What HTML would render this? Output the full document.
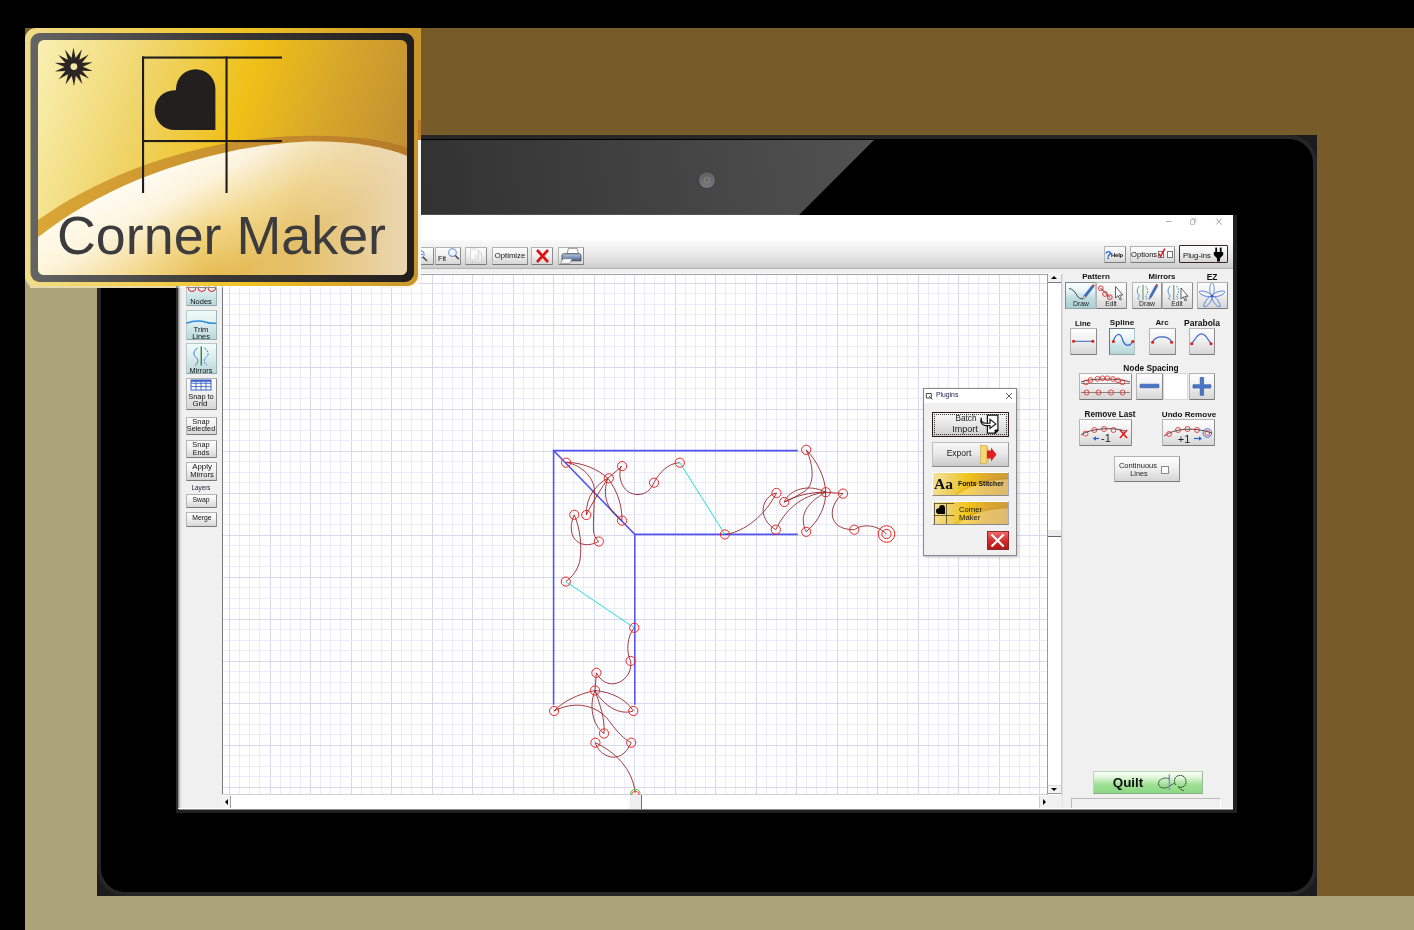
<!DOCTYPE html>
<html><head><meta charset="utf-8">
<style>
*{box-sizing:border-box;margin:0;padding:0}
html,body{width:1414px;height:930px;overflow:hidden;background:#000}
body{position:relative;font-family:"Liberation Sans",sans-serif;color:#000}
.a{position:absolute}
.btn{position:absolute;background:linear-gradient(#fdfdfd 0%,#f1f1f1 45%,#d6d6d6 100%);border:1px solid #b4b4b4;border-right-color:#8c8c8c;border-bottom-color:#7a7a7a;border-radius:1px}
.tbtn{position:absolute;background:linear-gradient(#f2fbfb 0%,#dff0f1 40%,#b9d8da 100%);border:1px solid #b9c9ca;border-bottom-color:#8ea8aa;border-right-color:#9cb2b3}
.lbl{position:absolute;font-size:7px;line-height:7px;text-align:center;color:#111;white-space:nowrap}
.rl{position:absolute;font-size:8px;font-weight:bold;line-height:8px;text-align:center;white-space:nowrap;color:#111}
</style></head><body>

<div class="a" style="left:25px;top:28px;width:1389px;height:868px;background:#775c2a"></div>
<div class="a" style="left:25px;top:200px;width:72px;height:730px;background:#aca379"></div>
<div class="a" style="left:25px;top:896px;width:1389px;height:34px;background:#aca379"></div>
<div class="a" style="left:97px;top:135px;width:1220px;height:761px;background:#1c1c1c"></div>
<div class="a" style="left:97px;top:135px;width:1220px;height:761px;background:#000;border:4px solid #262626;border-radius:28px"></div>
<svg class="a" style="left:0;top:0" width="1414" height="930">
<defs><linearGradient id="refl" x1="330" y1="216" x2="874" y2="140" gradientUnits="userSpaceOnUse">
<stop offset="0" stop-color="#2b2b2b"/><stop offset="1" stop-color="#525252"/></linearGradient></defs>
<polygon points="101,140 874,140 798,216 101,216" fill="url(#refl)"/><rect x="101" y="214" width="697" height="1.2" fill="#5a5a5a" opacity="0.7"/>
</svg>
<div class="a" style="left:698px;top:171px;width:18px;height:18px;border-radius:50%;background:#3e3e3e"></div>
<div class="a" style="left:699px;top:172px;width:16px;height:16px;border-radius:50%;background:linear-gradient(#5c5c62,#7a7a7e)"></div>
<div class="a" style="left:704px;top:177px;width:6px;height:6px;border-radius:1.5px;background:#6e6e70;border:0.6px solid #858585"></div>
<div class="a" style="left:176px;top:215px;width:1061px;height:598px;background:#202020"></div>
<div class="a" style="left:176px;top:215px;width:3px;height:595px;background:#2e2e2e"></div>
<div class="a" style="left:178px;top:215px;width:1054.5px;height:594px;background:#f0f0f0;border-bottom:1px solid #fff"></div>
<div class="a" style="left:179px;top:809px;width:1054px;height:1px;background:#8a8a8a"></div>
<div class="a" style="left:178px;top:215px;width:4px;height:593px;background:linear-gradient(90deg,#777,#d8d8d8,#f0f0f0)"></div>
<div class="a" style="left:180px;top:215px;width:1052.5px;height:26px;background:#fff"></div>
<svg class="a" style="left:1160px;top:214px" width="70" height="14" viewBox="1160 214 70 14"><path d="M1166,221.5 H1171.5" stroke="#a8a8a8" stroke-width="0.9"/><path d="M1190.5,219.8 h4 v4.6 h-4 z" fill="#fff" stroke="#b4b4b4" stroke-width="0.9"/><path d="M1191.6,218.6 h4.2 v4.4" fill="none" stroke="#b4b4b4" stroke-width="0.8"/><path d="M1216.3,218.6 L1221.5,224.6 M1221.5,218.6 L1216.3,224.6" stroke="#8c8c8c" stroke-width="0.8"/></svg>
<div class="a" style="left:180px;top:240px;width:1052.5px;height:28.5px;background:linear-gradient(#fbfbfb,#f0f0f0 30%,#e4e4e4 60%,#cacaca)"></div>
<div class="a" style="left:180px;top:268px;width:1052.5px;height:1px;background:#b4b4b4"></div>
<div class="a" style="left:222px;top:273px;width:840px;height:1px;background:#fafafa"></div>
<svg class="a" style="left:223px;top:275px" width="825" height="520" shape-rendering="crispEdges"><rect x="0" y="0" width="825" height="520" fill="#fff"/><rect x="6" y="0" width="1" height="520" fill="#d8d8ea"/><rect x="16" y="0" width="1" height="520" fill="#ebebfc"/><rect x="26" y="0" width="1" height="520" fill="#ebebfc"/><rect x="36" y="0" width="1" height="520" fill="#ebebfc"/><rect x="47" y="0" width="1" height="520" fill="#d8d8ea"/><rect x="57" y="0" width="1" height="520" fill="#ebebfc"/><rect x="67" y="0" width="1" height="520" fill="#ebebfc"/><rect x="77" y="0" width="1" height="520" fill="#ebebfc"/><rect x="87" y="0" width="1" height="520" fill="#d8d8ea"/><rect x="97" y="0" width="1" height="520" fill="#ebebfc"/><rect x="107" y="0" width="1" height="520" fill="#ebebfc"/><rect x="117" y="0" width="1" height="520" fill="#ebebfc"/><rect x="128" y="0" width="1" height="520" fill="#d8d8ea"/><rect x="138" y="0" width="1" height="520" fill="#ebebfc"/><rect x="148" y="0" width="1" height="520" fill="#ebebfc"/><rect x="158" y="0" width="1" height="520" fill="#ebebfc"/><rect x="168" y="0" width="1" height="520" fill="#d8d8ea"/><rect x="178" y="0" width="1" height="520" fill="#ebebfc"/><rect x="188" y="0" width="1" height="520" fill="#ebebfc"/><rect x="198" y="0" width="1" height="520" fill="#ebebfc"/><rect x="209" y="0" width="1" height="520" fill="#d8d8ea"/><rect x="219" y="0" width="1" height="520" fill="#ebebfc"/><rect x="229" y="0" width="1" height="520" fill="#ebebfc"/><rect x="239" y="0" width="1" height="520" fill="#ebebfc"/><rect x="249" y="0" width="1" height="520" fill="#d8d8ea"/><rect x="259" y="0" width="1" height="520" fill="#ebebfc"/><rect x="269" y="0" width="1" height="520" fill="#ebebfc"/><rect x="279" y="0" width="1" height="520" fill="#ebebfc"/><rect x="290" y="0" width="1" height="520" fill="#d8d8ea"/><rect x="300" y="0" width="1" height="520" fill="#ebebfc"/><rect x="310" y="0" width="1" height="520" fill="#ebebfc"/><rect x="320" y="0" width="1" height="520" fill="#ebebfc"/><rect x="330" y="0" width="1" height="520" fill="#d8d8ea"/><rect x="340" y="0" width="1" height="520" fill="#ebebfc"/><rect x="350" y="0" width="1" height="520" fill="#ebebfc"/><rect x="360" y="0" width="1" height="520" fill="#ebebfc"/><rect x="371" y="0" width="1" height="520" fill="#d8d8ea"/><rect x="381" y="0" width="1" height="520" fill="#ebebfc"/><rect x="391" y="0" width="1" height="520" fill="#ebebfc"/><rect x="401" y="0" width="1" height="520" fill="#ebebfc"/><rect x="411" y="0" width="1" height="520" fill="#d8d8ea"/><rect x="421" y="0" width="1" height="520" fill="#ebebfc"/><rect x="431" y="0" width="1" height="520" fill="#ebebfc"/><rect x="441" y="0" width="1" height="520" fill="#ebebfc"/><rect x="452" y="0" width="1" height="520" fill="#d8d8ea"/><rect x="462" y="0" width="1" height="520" fill="#ebebfc"/><rect x="472" y="0" width="1" height="520" fill="#ebebfc"/><rect x="482" y="0" width="1" height="520" fill="#ebebfc"/><rect x="492" y="0" width="1" height="520" fill="#d8d8ea"/><rect x="502" y="0" width="1" height="520" fill="#ebebfc"/><rect x="512" y="0" width="1" height="520" fill="#ebebfc"/><rect x="522" y="0" width="1" height="520" fill="#ebebfc"/><rect x="533" y="0" width="1" height="520" fill="#d8d8ea"/><rect x="543" y="0" width="1" height="520" fill="#ebebfc"/><rect x="553" y="0" width="1" height="520" fill="#ebebfc"/><rect x="563" y="0" width="1" height="520" fill="#ebebfc"/><rect x="573" y="0" width="1" height="520" fill="#d8d8ea"/><rect x="583" y="0" width="1" height="520" fill="#ebebfc"/><rect x="593" y="0" width="1" height="520" fill="#ebebfc"/><rect x="603" y="0" width="1" height="520" fill="#ebebfc"/><rect x="614" y="0" width="1" height="520" fill="#d8d8ea"/><rect x="624" y="0" width="1" height="520" fill="#ebebfc"/><rect x="634" y="0" width="1" height="520" fill="#ebebfc"/><rect x="644" y="0" width="1" height="520" fill="#ebebfc"/><rect x="654" y="0" width="1" height="520" fill="#d8d8ea"/><rect x="664" y="0" width="1" height="520" fill="#ebebfc"/><rect x="674" y="0" width="1" height="520" fill="#ebebfc"/><rect x="684" y="0" width="1" height="520" fill="#ebebfc"/><rect x="695" y="0" width="1" height="520" fill="#d8d8ea"/><rect x="705" y="0" width="1" height="520" fill="#ebebfc"/><rect x="715" y="0" width="1" height="520" fill="#ebebfc"/><rect x="725" y="0" width="1" height="520" fill="#ebebfc"/><rect x="735" y="0" width="1" height="520" fill="#d8d8ea"/><rect x="745" y="0" width="1" height="520" fill="#ebebfc"/><rect x="755" y="0" width="1" height="520" fill="#ebebfc"/><rect x="765" y="0" width="1" height="520" fill="#ebebfc"/><rect x="776" y="0" width="1" height="520" fill="#d8d8ea"/><rect x="786" y="0" width="1" height="520" fill="#ebebfc"/><rect x="796" y="0" width="1" height="520" fill="#ebebfc"/><rect x="806" y="0" width="1" height="520" fill="#ebebfc"/><rect x="816" y="0" width="1" height="520" fill="#d8d8ea"/><rect x="0" y="8" width="825" height="1" fill="#d8d8ea"/><rect x="0" y="18" width="825" height="1" fill="#ebebfc"/><rect x="0" y="29" width="825" height="1" fill="#ebebfc"/><rect x="0" y="39" width="825" height="1" fill="#ebebfc"/><rect x="0" y="50" width="825" height="1" fill="#d8d8ea"/><rect x="0" y="60" width="825" height="1" fill="#ebebfc"/><rect x="0" y="71" width="825" height="1" fill="#ebebfc"/><rect x="0" y="81" width="825" height="1" fill="#ebebfc"/><rect x="0" y="92" width="825" height="1" fill="#d8d8ea"/><rect x="0" y="102" width="825" height="1" fill="#ebebfc"/><rect x="0" y="113" width="825" height="1" fill="#ebebfc"/><rect x="0" y="123" width="825" height="1" fill="#ebebfc"/><rect x="0" y="134" width="825" height="1" fill="#d8d8ea"/><rect x="0" y="144" width="825" height="1" fill="#ebebfc"/><rect x="0" y="155" width="825" height="1" fill="#ebebfc"/><rect x="0" y="165" width="825" height="1" fill="#ebebfc"/><rect x="0" y="176" width="825" height="1" fill="#d8d8ea"/><rect x="0" y="186" width="825" height="1" fill="#ebebfc"/><rect x="0" y="197" width="825" height="1" fill="#ebebfc"/><rect x="0" y="207" width="825" height="1" fill="#ebebfc"/><rect x="0" y="218" width="825" height="1" fill="#d8d8ea"/><rect x="0" y="228" width="825" height="1" fill="#ebebfc"/><rect x="0" y="239" width="825" height="1" fill="#ebebfc"/><rect x="0" y="249" width="825" height="1" fill="#ebebfc"/><rect x="0" y="260" width="825" height="1" fill="#d8d8ea"/><rect x="0" y="270" width="825" height="1" fill="#ebebfc"/><rect x="0" y="281" width="825" height="1" fill="#ebebfc"/><rect x="0" y="291" width="825" height="1" fill="#ebebfc"/><rect x="0" y="302" width="825" height="1" fill="#d8d8ea"/><rect x="0" y="312" width="825" height="1" fill="#ebebfc"/><rect x="0" y="323" width="825" height="1" fill="#ebebfc"/><rect x="0" y="333" width="825" height="1" fill="#ebebfc"/><rect x="0" y="344" width="825" height="1" fill="#d8d8ea"/><rect x="0" y="354" width="825" height="1" fill="#ebebfc"/><rect x="0" y="365" width="825" height="1" fill="#ebebfc"/><rect x="0" y="375" width="825" height="1" fill="#ebebfc"/><rect x="0" y="386" width="825" height="1" fill="#d8d8ea"/><rect x="0" y="396" width="825" height="1" fill="#ebebfc"/><rect x="0" y="407" width="825" height="1" fill="#ebebfc"/><rect x="0" y="417" width="825" height="1" fill="#ebebfc"/><rect x="0" y="428" width="825" height="1" fill="#d8d8ea"/><rect x="0" y="438" width="825" height="1" fill="#ebebfc"/><rect x="0" y="449" width="825" height="1" fill="#ebebfc"/><rect x="0" y="459" width="825" height="1" fill="#ebebfc"/><rect x="0" y="470" width="825" height="1" fill="#d8d8ea"/><rect x="0" y="480" width="825" height="1" fill="#ebebfc"/><rect x="0" y="491" width="825" height="1" fill="#ebebfc"/><rect x="0" y="501" width="825" height="1" fill="#ebebfc"/><rect x="0" y="512" width="825" height="1" fill="#d8d8ea"/></svg>
<div class="a" style="left:222px;top:274px;width:826px;height:1px;background:#a0a0a0"></div>
<div class="a" style="left:222px;top:274px;width:1px;height:521px;background:#7a7a7a"></div>
<div class="a" style="left:1047px;top:274px;width:15px;height:521px;background:#fff;border-left:1px solid #9a9a9a;border-right:1px solid #c8c8c8"></div>
<div class="a" style="left:1048px;top:274px;width:13px;height:9px;background:#f2f2f2;border-bottom:1px solid #777"></div>
<div class="a" style="left:1051px;top:276px;width:0;height:0;border-left:3px solid transparent;border-right:3px solid transparent;border-bottom:3px solid #000"></div>
<div class="a" style="left:1048px;top:785px;width:13px;height:9px;background:#f2f2f2;border-top:1px solid #ddd;border-bottom:1px solid #999"></div>
<div class="a" style="left:1051px;top:788px;width:0;height:0;border-left:3px solid transparent;border-right:3px solid transparent;border-top:3px solid #000"></div>
<div class="a" style="left:1048px;top:530px;width:13px;height:7px;background:#ececec;border-bottom:1px solid #666"></div>
<div class="a" style="left:222px;top:794px;width:826px;height:15px;background:#fff;border-top:1px solid #cfcfcf"></div>
<div class="a" style="left:222px;top:796px;width:9px;height:12px;background:#f2f2f2;border-right:1px solid #999"></div>
<div class="a" style="left:225px;top:799px;width:0;height:0;border-top:3px solid transparent;border-bottom:3px solid transparent;border-right:3px solid #000"></div>
<div class="a" style="left:1039px;top:796px;width:9px;height:12px;background:#f2f2f2;border-left:1px solid #ccc"></div>
<div class="a" style="left:1043px;top:799px;width:0;height:0;border-top:3px solid transparent;border-bottom:3px solid transparent;border-left:3px solid #000"></div>
<div class="a" style="left:628.5px;top:795px;width:13.5px;height:14px;background:#efefef;border-right:1.2px solid #707070;border-left:1px solid #fafafa"></div>
<div class="a" style="left:1062px;top:274px;width:1px;height:534px;background:#e2e2e2"></div>
<div class="btn" style="left:408.0px;top:247.0px;width:26.0px;height:18.0px;"></div>
<div class="btn" style="left:435.4px;top:247.0px;width:26.0px;height:18.0px;"></div>
<div class="btn" style="left:465.3px;top:247.0px;width:22.2px;height:18.0px;"></div>
<div class="btn" style="left:492.0px;top:247.0px;width:35.6px;height:18.0px;"></div>
<div class="btn" style="left:531.4px;top:247.0px;width:22.0px;height:18.0px;"></div>
<div class="btn" style="left:557.5px;top:247.0px;width:26.7px;height:18.0px;"></div>
<svg class="a" style="left:415.0px;top:248.0px" width="22" height="16" viewBox="415.0 248.0 22 16"><circle cx="420.5" cy="254.5" r="3.6" fill="#eef4ff" stroke="#6a8fd0" stroke-width="1.1"/><rect x="418.3" y="254" width="4.4" height="1" fill="#3a6ad0"/><path d="M423,257 L427,261" stroke="#444" stroke-width="1.5"/></svg>
<div class="a" style="left:382.3px;top:255.3px;width:120px;text-align:center;font-size:7.40px;line-height:7.40px;font-weight:normal;color:#111;white-space:nowrap;will-change:transform;">Fit</div>
<svg class="a" style="left:435.0px;top:247.0px" width="27" height="18" viewBox="435.0 247.0 27 18"><circle cx="452.5" cy="252.6" r="3.8" fill="#f2f6ff" stroke="#6a8fd0" stroke-width="1.1"/><path d="M455.3,255.6 L458.8,259.3" stroke="#444" stroke-width="1.5"/></svg>
<svg class="a" style="left:465.0px;top:247.0px" width="23" height="18" viewBox="465.0 247.0 23 18"><path d="M472.5,250.5 h6 l3,3 v8.5 h-9 z" fill="#f4f4f4" stroke="#c8c8c8" stroke-width="0.8"/><path d="M470.5,249 h6 l2,2 v9 h-8 z" fill="#fbfbfb" stroke="#cfcfcf" stroke-width="0.8"/><path d="M474,255 h5 M474,257 h5 M474,259 h5" stroke="#c9d6e6" stroke-width="0.7"/></svg>
<div class="a" style="left:449.8px;top:251.8px;width:120px;text-align:center;font-size:7.70px;line-height:7.70px;font-weight:normal;color:#111;white-space:nowrap;will-change:transform;">Optimize</div>
<svg class="a" style="left:531.0px;top:247.0px" width="23" height="18" viewBox="531.0 247.0 23 18"><path d="M537,250 L548,262 M548,250 L537,262" stroke="#e01010" stroke-width="2.6"/></svg>
<svg class="a" style="left:557.0px;top:247.0px" width="28" height="18" viewBox="557.0 247.0 28 18"><defs><linearGradient id="prg" x1="0" y1="0" x2="0" y2="1"><stop offset="0" stop-color="#b8cce8"/><stop offset="1" stop-color="#4a6088"/></linearGradient></defs><path d="M568.5,248.3 h8.5 l1.5,5.5 h-11.5 z" fill="#fff" stroke="#666" stroke-width="0.7"/><path d="M563.5,253.8 h16 q1.5,0 1.5,1.5 v5.5 h-19 v-5.5 q0,-1.5 1.5,-1.5 z" fill="url(#prg)" stroke="#333" stroke-width="0.7"/><path d="M563,258.8 h9 l-2,4.5 h-9.5 z" fill="#fff" stroke="#777" stroke-width="0.6"/></svg>
<div class="btn" style="left:1103.7px;top:245.7px;width:22.0px;height:17.7px;"></div>
<div class="a" style="left:1104.6px;top:250.0px;font-size:11.00px;line-height:11.00px;font-weight:bold;color:#2a66d8;white-space:nowrap;will-change:transform;">?</div>
<div class="a" style="left:1111.3px;top:252.6px;font-size:5.90px;line-height:5.90px;font-weight:bold;color:#111;white-space:nowrap;will-change:transform;letter-spacing:-0.2px">Help</div>
<div class="btn" style="left:1130.0px;top:245.7px;width:44.9px;height:17.7px;"></div>
<div class="a" style="left:1130.8px;top:251.2px;font-size:7.60px;line-height:7.60px;font-weight:normal;color:#111;white-space:nowrap;will-change:transform;">Options</div>
<div class="a" style="left:1158.0px;top:251.0px;width:6.4px;height:6.7px;border:1px solid #777;background:#fff"></div>
<div class="a" style="left:1166.8px;top:251.0px;width:6.2px;height:6.7px;border:1px solid #777;background:#fff"></div>
<svg class="a" style="left:1157.0px;top:247.0px" width="10" height="12" viewBox="1157.0 247.0 10 12"><path d="M1158.8,253.8 L1160.6,256.4 L1164.8,248.6" fill="none" stroke="#e01818" stroke-width="1.5"/></svg>
<div class="btn" style="left:1179.0px;top:245.3px;width:48.9px;height:18.1px;border-color:#3a2626;border-width:1px"></div>
<div class="a" style="left:1183.2px;top:251.8px;font-size:7.70px;line-height:7.70px;font-weight:normal;color:#111;white-space:nowrap;will-change:transform;">Plug-ins</div>
<svg class="a" style="left:1213.0px;top:246.0px" width="12" height="17" viewBox="1213.0 246.0 12 17"><rect x="1215.3" y="247.6" width="1.8" height="4.5" fill="#000"/><rect x="1219.8" y="247.6" width="1.8" height="4.5" fill="#000"/><path d="M1213.8,252 h9.4 v3 l-3.2,3.2 v3.3 h-3 v-3.3 l-3.2,-3.2 z" fill="#000"/></svg>
<div class="tbtn" style="left:185.5px;top:278.0px;width:31.0px;height:28.0px;"></div>
<svg class="a" style="left:185.0px;top:282.0px" width="32" height="12" viewBox="185.0 282.0 32 12"><path d="M186,287.5 L216,287.5" stroke="#222" stroke-width="1"/><circle cx="192" cy="287.6" r="3.9" fill="none" stroke="#e02020" stroke-width="1"/><circle cx="201.8" cy="287.6" r="3.9" fill="none" stroke="#e02020" stroke-width="1"/><circle cx="211.8" cy="287.6" r="3.9" fill="none" stroke="#e02020" stroke-width="1"/></svg>
<div class="a" style="left:141.2px;top:297.7px;width:120px;text-align:center;font-size:7.50px;line-height:7.50px;font-weight:normal;color:#111;white-space:nowrap;will-change:transform;">Nodes</div>
<div class="tbtn" style="left:185.5px;top:310.0px;width:31.0px;height:30.2px;"></div>
<svg class="a" style="left:185.0px;top:314.0px" width="32" height="12" viewBox="185.0 314.0 32 12"><path d="M186.5,323.2 C194,320.3 200,320.3 206,322.2 C210,323.4 213,323.6 216,323.2" fill="none" stroke="#2d8fe0" stroke-width="1.5"/></svg>
<div class="a" style="left:141.0px;top:326.1px;width:120px;text-align:center;font-size:7.60px;line-height:7.60px;font-weight:normal;color:#111;white-space:nowrap;will-change:transform;">Trim</div>
<div class="a" style="left:141.0px;top:332.6px;width:120px;text-align:center;font-size:7.40px;line-height:7.40px;font-weight:normal;color:#111;white-space:nowrap;will-change:transform;">Lines</div>
<div class="tbtn" style="left:185.5px;top:343.4px;width:31.0px;height:31.0px;"></div>
<svg class="a" style="left:185.0px;top:344.0px" width="32" height="24" viewBox="185.0 344.0 32 24"><rect x="200.6" y="346.5" width="1.4" height="19" fill="#2e8a2e"/><path d="M197.5,348 C193,351 193,355 196,357.5 C199,360 198,363 195,365.5" fill="none" stroke="#3470d0" stroke-width="1"/><path d="M204.5,348 C209,351 209,355 206,357.5 C203,360 204,363 207,365.5" fill="none" stroke="#3470d0" stroke-width="1" stroke-dasharray="2,1.3"/></svg>
<div class="a" style="left:141.2px;top:366.9px;width:120px;text-align:center;font-size:7.40px;line-height:7.40px;font-weight:normal;color:#111;white-space:nowrap;will-change:transform;">Mirrors</div>
<div class="btn" style="left:185.5px;top:377.9px;width:31.0px;height:32.1px;"></div>
<svg class="a" style="left:185.0px;top:378.0px" width="32" height="14" viewBox="185.0 378.0 32 14"><rect x="191" y="380" width="20" height="10" fill="#fff" stroke="#3c64c8" stroke-width="1"/><path d="M196,380 v10 M201,380 v10 M206,380 v10 M191,383.3 h20 M191,386.6 h20" stroke="#3c64c8" stroke-width="0.9"/><rect x="191" y="380" width="20" height="1.8" fill="#3c64c8"/></svg>
<div class="a" style="left:140.7px;top:392.9px;width:120px;text-align:center;font-size:7.40px;line-height:7.40px;font-weight:normal;color:#111;white-space:nowrap;will-change:transform;">Snap to</div>
<div class="a" style="left:140.4px;top:399.8px;width:120px;text-align:center;font-size:7.90px;line-height:7.90px;font-weight:normal;color:#111;white-space:nowrap;will-change:transform;">Grid</div>
<div class="btn" style="left:186.0px;top:416.7px;width:31.0px;height:18.8px;"></div>
<div class="a" style="left:141.1px;top:417.8px;width:120px;text-align:center;font-size:7.40px;line-height:7.40px;font-weight:normal;color:#111;white-space:nowrap;will-change:transform;">Snap</div>
<div class="a" style="left:141.4px;top:425.4px;width:120px;text-align:center;font-size:7.30px;line-height:7.30px;font-weight:normal;color:#111;white-space:nowrap;will-change:transform;">Selected</div>
<div class="btn" style="left:186.0px;top:439.6px;width:31.0px;height:18.1px;"></div>
<div class="a" style="left:141.1px;top:441.3px;width:120px;text-align:center;font-size:7.40px;line-height:7.40px;font-weight:normal;color:#111;white-space:nowrap;will-change:transform;">Snap</div>
<div class="a" style="left:141.4px;top:448.8px;width:120px;text-align:center;font-size:7.30px;line-height:7.30px;font-weight:normal;color:#111;white-space:nowrap;will-change:transform;">Ends</div>
<div class="btn" style="left:186.0px;top:462.2px;width:31.0px;height:18.4px;"></div>
<div class="a" style="left:141.5px;top:462.6px;width:120px;text-align:center;font-size:7.90px;line-height:7.90px;font-weight:normal;color:#111;white-space:nowrap;will-change:transform;">Apply</div>
<div class="a" style="left:142.0px;top:470.9px;width:120px;text-align:center;font-size:7.50px;line-height:7.50px;font-weight:normal;color:#111;white-space:nowrap;will-change:transform;">Mirrors</div>
<div class="a" style="left:141.0px;top:485.3px;width:120px;text-align:center;font-size:6.30px;line-height:6.30px;font-weight:normal;color:#1a1a3a;white-space:nowrap;will-change:transform;">Layers</div>
<div class="btn" style="left:186.0px;top:494.0px;width:31.0px;height:13.8px;"></div>
<div class="a" style="left:141.4px;top:496.9px;width:120px;text-align:center;font-size:6.80px;line-height:6.80px;font-weight:normal;color:#111;white-space:nowrap;will-change:transform;">Swap</div>
<div class="btn" style="left:186.0px;top:512.2px;width:31.0px;height:14.5px;"></div>
<div class="a" style="left:141.5px;top:514.6px;width:120px;text-align:center;font-size:6.80px;line-height:6.80px;font-weight:normal;color:#111;white-space:nowrap;will-change:transform;">Merge</div>
<svg class="a" style="left:223px;top:275px" width="825" height="520" viewBox="223 275 825 520">
<g stroke="#5555f2" stroke-width="1.6" fill="none" stroke-linecap="square">
<path d="M553.6,450.6 H797 M553.6,450.6 V704 M553.6,450.6 L634.8,534.4 H797 M634.8,534.4 V704"/>
</g>
<g stroke="#22dede" stroke-width="1" fill="none"><path d="M679.8,462.7 L724.9,534.4 M565.8,581.6 L634.3,627.8"/></g>
<g stroke="#8e1c1c" stroke-width="0.9" fill="none" opacity="0.95">
<path d="M566.3,462.3 C582,462.5 598,469 608,478.5"/>
<path d="M566,462.3 C582,465 594,478 594.4,490 C594.6,500 593,520 593.5,531 C594,536 596,539 598.8,541.5"/>
<path d="M622.1,466.2 L608,478 C603,486 592,503 586.3,515"/>
<path d="M608,478 C596,485 586,496 586.3,515"/>
<path d="M608,478 C603,492 604,508 622,520.6"/>
<path d="M608.5,479 C616,490 622,502 622,520.6"/>
<path d="M621,466 C617,480 624,494 637,494.5 C646,495 651,489 654,482.7 C659,473 668,463 679.8,462.7"/>
<path d="M574.3,514.8 C569,526 570,540 582,544 C590,546 595,543 598.8,541.5"/>
<path d="M574.3,515 C580,528 582,545 580,560 C578,570 572,577 565.8,581.6"/>
<path d="M724.9,534.4 C745,532 765,515 776.5,493"/>
<path d="M776.5,493 C762,496 756,518 775.8,529.7"/>
<path d="M775.8,529.7 C784,512 800,495 825.7,492.2"/>
<path d="M784.3,502 C795,496 810,492 825.7,492.2"/>
<path d="M784.3,502 C789,490 808,483 825.7,492.2"/>
<path d="M806.2,449.8 C815,468 814,487 803.4,492 C797,496 790,500 784.3,502"/>
<path d="M806.2,449.8 C818,462 825,478 825.7,492.2"/>
<path d="M825.7,492.2 C812,500 802,510 803.4,522 C804,527 805,530 806.2,531.8"/>
<path d="M825.7,492.2 C826,505 820,520 806.2,531.8"/>
<path d="M825.7,492.2 L843,493.6"/>
<path d="M843,493.6 C828,505 826,530 854.3,529.7"/>
<path d="M854.3,529.7 C862,524 876,524 886.5,534"/>
<path d="M634.3,627.8 C627,636 626,652 630.6,660.9"/>
<path d="M630.6,660.9 C634,680 608,695 596.4,672.8"/>
<path d="M596.4,672.8 L595,690.5"/>
<path d="M595,690.5 C578,694 562,702 554.1,711"/>
<path d="M554.1,711 C575,700 598,705 610,722 C617,732 624,739 631.2,742.7"/>
<path d="M595,690.5 C612,692 627,700 633.3,711"/>
<path d="M595,691 C603,704 618,716 633.3,711"/>
<path d="M595,690.5 C589,705 592,725 604,733.5"/>
<path d="M595,690.5 C600,705 605,718 604,733.5"/>
<path d="M595.4,742.7 C598,755 620,768 631.2,742.7"/>
<path d="M595.4,742.7 C615,752 632,768 635.3,792.8"/>
</g>
<g stroke="#ec2424" stroke-width="1" fill="none">
<circle cx="566.1" cy="462.7" r="4.6"/>
<circle cx="622.1" cy="466.1" r="4.6"/>
<circle cx="608.8" cy="478.3" r="4.6"/>
<circle cx="654.0" cy="482.7" r="4.6"/>
<circle cx="679.8" cy="462.7" r="4.6"/>
<circle cx="586.3" cy="515.0" r="4.6"/>
<circle cx="574.3" cy="514.8" r="4.6"/>
<circle cx="622.0" cy="520.6" r="4.6"/>
<circle cx="598.8" cy="541.5" r="4.6"/>
<circle cx="565.8" cy="581.6" r="4.6"/>
<circle cx="724.9" cy="534.4" r="4.6"/>
<circle cx="776.5" cy="493.0" r="4.6"/>
<circle cx="784.3" cy="502.0" r="4.6"/>
<circle cx="806.2" cy="449.8" r="4.6"/>
<circle cx="825.7" cy="492.2" r="4.6"/>
<circle cx="843.0" cy="493.6" r="4.6"/>
<circle cx="775.8" cy="529.7" r="4.6"/>
<circle cx="806.2" cy="531.8" r="4.6"/>
<circle cx="854.3" cy="529.7" r="4.6"/>
<circle cx="886.5" cy="534.0" r="4.6"/>
<circle cx="634.3" cy="627.8" r="4.6"/>
<circle cx="630.6" cy="660.9" r="4.6"/>
<circle cx="596.4" cy="672.8" r="4.6"/>
<circle cx="595.0" cy="690.5" r="4.6"/>
<circle cx="554.1" cy="711.0" r="4.6"/>
<circle cx="633.3" cy="711.0" r="4.6"/>
<circle cx="604.0" cy="733.5" r="4.6"/>
<circle cx="595.4" cy="742.7" r="4.6"/>
<circle cx="631.2" cy="742.7" r="4.6"/>
<circle cx="886.5" cy="534" r="8.3"/>
</g>
<path d="M630.5,794 A4.8,4.8 0 0 1 640.1,794" stroke="#30d030" stroke-width="1" fill="none"/>
<path d="M631.5,795 A3.8,3.8 0 0 1 639.1,795" stroke="#ec2424" stroke-width="0.8" fill="none"/>
</svg>
<div class="a" style="left:923.2px;top:388.2px;width:94.3px;height:167.5px;background:#f0f0f0;border:1px solid #8a8a8a;box-shadow:1px 1px 3px rgba(0,0,0,0.25)"></div>
<div class="a" style="left:924.2px;top:389.2px;width:92.3px;height:13.5px;background:#fff"></div>
<svg class="a" style="left:925.0px;top:392.0px" width="9" height="9" viewBox="925.0 392.0 9 9"><path d="M926.3,393.5 h5 v4.5 h-5 z" fill="none" stroke="#333" stroke-width="0.9"/><path d="M929,396 l3.5,3.5" stroke="#2a7a7a" stroke-width="1"/></svg>
<div class="a" style="left:935.8px;top:392.0px;font-size:6.80px;line-height:6.80px;font-weight:normal;color:#1a1a4a;white-space:nowrap;will-change:transform;">Plugins</div>
<svg class="a" style="left:1005.0px;top:392.0px" width="8" height="8" viewBox="1005.0 392.0 8 8"><path d="M1006,393 L1012,399 M1012,393 L1006,399" stroke="#333" stroke-width="0.8"/></svg>
<div class="a" style="left:932.1px;top:412.1px;width:76.6px;height:24.5px;background:linear-gradient(#fafafa,#e6e6e6 50%,#cfcfcf);border:1.5px solid #2e1a1a"></div>
<div class="a" style="left:934.2px;top:414.3px;width:72.4px;height:20.3px;border:1px dotted #333"></div>
<div class="a" style="left:905.5px;top:415.3px;width:120px;text-align:center;font-size:8.20px;line-height:8.20px;font-weight:normal;color:#1a1a1a;white-space:nowrap;will-change:transform;">Batch</div>
<div class="a" style="left:905.4px;top:425.2px;width:120px;text-align:center;font-size:9.00px;line-height:9.00px;font-weight:normal;color:#1a1a1a;white-space:nowrap;will-change:transform;">Import</div>
<svg class="a" style="left:978.0px;top:413.0px" width="24" height="23" viewBox="978.0 413.0 24 23"><path d="M987.4,415.2 H997.9 V430.5 L995,433.2 H987.4 Z" fill="#fafafa" stroke="#111" stroke-width="1.2"/><path d="M998.2,430 L995,433.6 L995,430 Z" fill="#000" stroke="#000" stroke-width="0.8"/><path d="M981.3,417.6 C980.6,421.5 982.3,423.2 986,423.2 H990 V419.4 L995.8,423.9 L990,428.4 V425.6 H986 C981.5,425.6 979.8,421.5 981.3,417.6 Z" fill="#fff" stroke="#111" stroke-width="1.1"/></svg>
<div class="a" style="left:932.1px;top:442.0px;width:76.6px;height:24.7px;background:linear-gradient(#f6f6f6,#e9e9e9 45%,#c9c9c9);border:1px solid #bdbdbd;border-bottom-color:#8a8a8a;border-right-color:#9a9a9a"></div>
<div class="a" style="left:898.6px;top:448.6px;width:120px;text-align:center;font-size:8.50px;line-height:8.50px;font-weight:normal;color:#1a1a1a;white-space:nowrap;will-change:transform;">Export</div>
<svg class="a" style="left:978.0px;top:443.0px" width="20" height="23" viewBox="978.0 443.0 20 23"><rect x="980.5" y="445.5" width="6" height="18" fill="#f4d878" stroke="#c8a040" stroke-width="0.6"/><rect x="986" y="446.5" width="2.5" height="16" fill="#e8c060"/><path d="M987,450.5 h4 v-3 l5.5,7 l-5.5,7 v-3 h-4 z" fill="#e02020"/></svg>
<div class="a" style="left:932.1px;top:472.0px;width:76.6px;height:24.0px;background:linear-gradient(100deg,#f6e49a 0%,#eed060 25%,#f0c418 45%,#dca830 70%,#c99a3a 100%);border-top:1px solid #fff;border-left:1px solid #fff;border-bottom:1.5px solid #8a8a8a;border-right:1px solid #a8acb8"></div>
<svg class="a" style="left:933.0px;top:473.0px" width="75" height="24" viewBox="933.0 473.0 75 24"><path d="M958.0,495.0 C975.0,482.8 990.0,480.4 1008.0,479.2 L1008.0,495.0 Z" fill="#fff3d0" opacity="0.35"/><path d="M955.0,495.0 C972.0,482.1 988.0,479.2 1008.0,478.0" fill="none" stroke="#c8902a" stroke-width="0.8" opacity="0.6"/></svg>
<div class="a" style="left:933.5px;top:476.2px;font-size:15.50px;line-height:15.50px;font-weight:bold;color:#111;white-space:nowrap;will-change:transform;font-family:'Liberation Serif',serif">Aa</div>
<div class="a" style="left:958.2px;top:480.5px;font-size:6.80px;line-height:6.80px;font-weight:bold;color:#111;white-space:nowrap;will-change:transform;">Fonts Stitcher</div>
<div class="a" style="left:932.1px;top:501.0px;width:76.6px;height:24.0px;background:linear-gradient(100deg,#f6e49a 0%,#eed060 25%,#f0c418 45%,#dca830 70%,#c99a3a 100%);border-top:1px solid #fff;border-left:1px solid #fff;border-bottom:1.5px solid #8a8a8a;border-right:1px solid #a8acb8"></div>
<svg class="a" style="left:933.0px;top:502.0px" width="75" height="24" viewBox="933.0 502.0 75 24"><path d="M958.0,524.0 C975.0,511.8 990.0,509.4 1008.0,508.2 L1008.0,524.0 Z" fill="#fff3d0" opacity="0.35"/><path d="M955.0,524.0 C972.0,511.1 988.0,508.2 1008.0,507.0" fill="none" stroke="#c8902a" stroke-width="0.8" opacity="0.6"/></svg>
<svg class="a" style="left:932.0px;top:501.0px" width="24" height="24" viewBox="932.0 501.0 24 24"><path d="M934,503.5 h20.3 M934,515.5 h20.3 M934.5,503 v21 M946.5,503 v21" stroke="#3a3020" stroke-width="0.7"/><g transform="translate(936,505) scale(0.1475) translate(-154.7,-69)"><path d="M215.4,130 L215.4,89 A19.7,19.7 0 0 0 176,89 L176,90.3 L174.5,90.3 A19.8,19.8 0 0 0 174.5,130 Z" fill="#000"/></g></svg>
<div class="a" style="left:959.2px;top:505.9px;font-size:7.50px;line-height:7.50px;font-weight:normal;color:#111;white-space:nowrap;will-change:transform;">Corner</div>
<div class="a" style="left:959.2px;top:514.1px;font-size:7.70px;line-height:7.70px;font-weight:normal;color:#111;white-space:nowrap;will-change:transform;">Maker</div>
<div class="a" style="left:986.5px;top:531.0px;width:22.2px;height:19.0px;background:linear-gradient(#f06a6a,#d42828 55%,#b01818);border:1px solid #8a2a2a"></div>
<svg class="a" style="left:986.0px;top:531.0px" width="23" height="20" viewBox="986.0 531.0 23 20"><path d="M991.5,534.5 L1003.7,546.5 M1003.7,534.5 L991.5,546.5" stroke="#fff" stroke-width="2.2"/></svg>
<div class="a" style="left:1036.4px;top:273.2px;width:120px;text-align:center;font-size:8.00px;line-height:8.00px;font-weight:bold;color:#111;white-space:nowrap;will-change:transform;">Pattern</div>
<div class="a" style="left:1101.8px;top:273.4px;width:120px;text-align:center;font-size:7.80px;line-height:7.80px;font-weight:bold;color:#111;white-space:nowrap;will-change:transform;">Mirrors</div>
<div class="a" style="left:1152.4px;top:272.9px;width:120px;text-align:center;font-size:8.40px;line-height:8.40px;font-weight:bold;color:#111;white-space:nowrap;will-change:transform;">EZ</div>
<div class="tbtn" style="left:1065.3px;top:282.3px;width:30.7px;height:26.5px;background:linear-gradient(#fbfdfd 0%,#eaf5f6 30%,#c4e0e2 55%,#a9ced1 100%);border-color:#7a8a8a #b0c4c4 #90a8a8 #7a8a8a"></div>
<div class="btn" style="left:1096.0px;top:282.3px;width:31.0px;height:26.5px;"></div>
<div class="btn" style="left:1131.5px;top:282.3px;width:30.5px;height:26.5px;"></div>
<div class="btn" style="left:1162.0px;top:282.3px;width:31.0px;height:26.5px;"></div>
<div class="btn" style="left:1197.0px;top:282.3px;width:31.0px;height:26.5px;"></div>
<svg class="a" style="left:1066.0px;top:283.0px" width="30" height="20" viewBox="1066.0 283.0 30 20"><path d="M1069,288.5 C1073,289 1075,292 1077,295.5 C1078.5,298 1080,299 1083,298.8" fill="none" stroke="#333" stroke-width="0.9"/><path d="M1082.5,299.5 L1084,295.5 L1092,285.3 L1094,286.8 L1086,297 Z" fill="#3d6cc0" stroke="#2a4a8a" stroke-width="0.4"/><path d="M1092,285.3 L1093,284 L1095,285.5 L1094,286.8 Z" fill="#d04030"/><path d="M1082.5,299.5 L1084,295.5 L1086,297 Z" fill="#e0b080"/></svg>
<div class="a" style="left:1021.4px;top:301.2px;width:120px;text-align:center;font-size:6.80px;line-height:6.80px;font-weight:normal;color:#222;white-space:nowrap;will-change:transform;">Draw</div>
<svg class="a" style="left:1097.0px;top:283.0px" width="30" height="20" viewBox="1097.0 283.0 30 20"><path d="M1100.5,288 L1110,297.5" stroke="#333" stroke-width="1"/><circle cx="1100.8" cy="288.3" r="2.4" fill="none" stroke="#e82020" stroke-width="0.9"/><circle cx="1105" cy="294" r="2.4" fill="none" stroke="#e82020" stroke-width="0.9"/><circle cx="1109.8" cy="297.2" r="2.4" fill="none" stroke="#e82020" stroke-width="0.9"/><path d="M1115.5,286.5 L1115.5,298 L1118,295.6 L1120,300 L1121.5,299.3 L1119.6,295 L1122.8,295 Z" fill="#fff" stroke="#222" stroke-width="0.7"/></svg>
<div class="a" style="left:1051.3px;top:301.4px;width:120px;text-align:center;font-size:6.60px;line-height:6.60px;font-weight:normal;color:#222;white-space:nowrap;will-change:transform;">Edit</div>
<svg class="a" style="left:1132.0px;top:283.0px" width="30" height="20" viewBox="1132.0 283.0 30 20"><rect x="1142.5" y="285" width="1" height="15" fill="#4a9a4a"/><path d="M1139.5,286 C1136.5,289 1136.5,293 1139.5,296 C1137.5,298 1137.5,299 1139.5,300" fill="none" stroke="#3a70d0" stroke-width="0.8"/><path d="M1145.5,286 C1148.5,289 1148.5,293 1145.5,296 C1147.5,298 1147.5,299 1145.5,300" fill="none" stroke="#3a70d0" stroke-width="0.8" stroke-dasharray="1.8,1"/><path d="M1149,299.5 L1150,295.5 L1155.5,285.3 L1157.5,286.5 L1151.8,296.8 Z" fill="#3d6cc0" stroke="#2a4a8a" stroke-width="0.4"/><path d="M1155.5,285.3 L1156.3,283.8 L1158.3,285 L1157.5,286.5 Z" fill="#d04030"/></svg>
<div class="a" style="left:1086.5px;top:301.2px;width:120px;text-align:center;font-size:6.80px;line-height:6.80px;font-weight:normal;color:#222;white-space:nowrap;will-change:transform;">Draw</div>
<svg class="a" style="left:1163.0px;top:283.0px" width="30" height="20" viewBox="1163.0 283.0 30 20"><rect x="1173.3" y="285" width="1" height="15" fill="#4a9a4a"/><path d="M1170.3,286 C1167.3,289 1167.3,293 1170.3,296 C1168.3,298 1168.3,299 1170.3,300" fill="none" stroke="#3a70d0" stroke-width="0.8"/><path d="M1176.3,286 C1179.3,289 1179.3,293 1176.3,296 C1178.3,298 1178.3,299 1176.3,300" fill="none" stroke="#3a70d0" stroke-width="0.8" stroke-dasharray="1.8,1"/><path d="M1181,288 L1181,299 L1183.3,296.8 L1185.2,301 L1186.6,300.3 L1184.8,296.3 L1188,296.3 Z" fill="#fff" stroke="#222" stroke-width="0.7"/></svg>
<div class="a" style="left:1116.8px;top:301.4px;width:120px;text-align:center;font-size:6.60px;line-height:6.60px;font-weight:normal;color:#222;white-space:nowrap;will-change:transform;">Edit</div>
<svg class="a" style="left:1198.0px;top:283.0px" width="30" height="26" viewBox="1198.0 283.0 30 26"><ellipse cx="1212" cy="289.2" rx="2.2" ry="6.5" fill="none" stroke="#4a78d8" stroke-width="0.8" transform="rotate(0 1212 296)"/><ellipse cx="1212" cy="289.2" rx="2.2" ry="6.5" fill="none" stroke="#4a78d8" stroke-width="0.8" transform="rotate(72 1212 296)"/><ellipse cx="1212" cy="289.2" rx="2.2" ry="6.5" fill="none" stroke="#4a78d8" stroke-width="0.8" transform="rotate(144 1212 296)"/><ellipse cx="1212" cy="289.2" rx="2.2" ry="6.5" fill="none" stroke="#4a78d8" stroke-width="0.8" transform="rotate(216 1212 296)"/><ellipse cx="1212" cy="289.2" rx="2.2" ry="6.5" fill="none" stroke="#4a78d8" stroke-width="0.8" transform="rotate(288 1212 296)"/><circle cx="1212" cy="296" r="1.3" fill="#2a58c8"/></svg>
<div class="a" style="left:1023.4px;top:319.5px;width:120px;text-align:center;font-size:7.70px;line-height:7.70px;font-weight:bold;color:#111;white-space:nowrap;will-change:transform;">Line</div>
<div class="a" style="left:1062.4px;top:319.1px;width:120px;text-align:center;font-size:8.10px;line-height:8.10px;font-weight:bold;color:#111;white-space:nowrap;will-change:transform;">Spline</div>
<div class="a" style="left:1102.1px;top:319.3px;width:120px;text-align:center;font-size:7.90px;line-height:7.90px;font-weight:bold;color:#111;white-space:nowrap;will-change:transform;">Arc</div>
<div class="a" style="left:1141.6px;top:318.8px;width:120px;text-align:center;font-size:8.50px;line-height:8.50px;font-weight:bold;color:#111;white-space:nowrap;will-change:transform;">Parabola</div>
<div class="btn" style="left:1070.0px;top:327.8px;width:26.6px;height:27.7px;"></div>
<div class="tbtn" style="left:1109.0px;top:327.8px;width:26.3px;height:27.7px;background:linear-gradient(#fbfdfd 0%,#eef7f8 35%,#cfe6e8 60%,#b6d6d9 100%);border-color:#6a7a7a #b0c4c4 #90a8a8 #6a7a7a"></div>
<div class="btn" style="left:1149.0px;top:327.8px;width:27.0px;height:27.7px;"></div>
<div class="btn" style="left:1188.5px;top:327.8px;width:26.2px;height:27.7px;"></div>
<svg class="a" style="left:1070.0px;top:328.0px" width="27" height="27" viewBox="1070.0 328.0 27 27"><path d="M1073.5,341.3 L1092.8,341.3" stroke="#3a64c8" stroke-width="1"/><circle cx="1073.5" cy="341.3" r="1.5" fill="#e81818"/><circle cx="1092.8" cy="341.3" r="1.5" fill="#e81818"/></svg>
<svg class="a" style="left:1109.0px;top:328.0px" width="27" height="27" viewBox="1109.0 328.0 27 27"><path d="M1113.4,341.5 C1115,334 1120,332 1122,338 C1124,346 1129,348 1132.8,341.5" fill="none" stroke="#3a64c8" stroke-width="1.2"/><circle cx="1113.4" cy="341.5" r="1.5" fill="#e81818"/><circle cx="1132.8" cy="341.5" r="1.5" fill="#e81818"/></svg>
<svg class="a" style="left:1149.0px;top:328.0px" width="27" height="27" viewBox="1149.0 328.0 27 27"><path d="M1152.6,342.2 C1155,335 1169,335 1171.6,342.2" fill="none" stroke="#3a64c8" stroke-width="1.2"/><circle cx="1152.6" cy="342.2" r="1.5" fill="#e81818"/><circle cx="1171.6" cy="342.2" r="1.5" fill="#e81818"/></svg>
<svg class="a" style="left:1188.0px;top:328.0px" width="27" height="27" viewBox="1188.0 328.0 27 27"><path d="M1191.7,343.7 L1197,336.5 C1200,333 1203,333 1206,336.5 L1211,343.7" fill="none" stroke="#3a64c8" stroke-width="1.2"/><circle cx="1191.7" cy="343.7" r="1.5" fill="#e81818"/><circle cx="1211" cy="343.7" r="1.5" fill="#e81818"/></svg>
<div class="a" style="left:1091.4px;top:364.2px;width:120px;text-align:center;font-size:8.30px;line-height:8.30px;font-weight:bold;color:#111;white-space:nowrap;will-change:transform;">Node Spacing</div>
<div class="btn" style="left:1079.0px;top:373.0px;width:53.0px;height:27.4px;"></div>
<svg class="a" style="left:1079.0px;top:373.0px" width="54" height="28" viewBox="1079.0 373.0 54 28"><path d="M1081,382 C1090,378 1120,378 1130,382" fill="none" stroke="#222" stroke-width="0.8"/><path d="M1081,392.5 L1130,392.5" stroke="#444" stroke-width="0.6"/><path d="M1081,383.5 L1130,383.5" stroke="#444" stroke-width="0.6"/><circle cx="1086" cy="382.5" r="2.4" fill="none" stroke="#e82020" stroke-width="0.8"/><circle cx="1090.5" cy="380" r="2.4" fill="none" stroke="#e82020" stroke-width="0.8"/><circle cx="1097.5" cy="378.8" r="2.4" fill="none" stroke="#e82020" stroke-width="0.8"/><circle cx="1102.5" cy="378.3" r="2.4" fill="none" stroke="#e82020" stroke-width="0.8"/><circle cx="1107.5" cy="378.3" r="2.4" fill="none" stroke="#e82020" stroke-width="0.8"/><circle cx="1113" cy="379" r="2.4" fill="none" stroke="#e82020" stroke-width="0.8"/><circle cx="1118" cy="380.3" r="2.4" fill="none" stroke="#e82020" stroke-width="0.8"/><circle cx="1122.5" cy="382.3" r="2.4" fill="none" stroke="#e82020" stroke-width="0.8"/><circle cx="1086.5" cy="392.5" r="2.5" fill="none" stroke="#e82020" stroke-width="0.8"/><circle cx="1098.5" cy="392.5" r="2.5" fill="none" stroke="#e82020" stroke-width="0.8"/><circle cx="1111" cy="392.5" r="2.5" fill="none" stroke="#e82020" stroke-width="0.8"/><circle cx="1122.5" cy="392.5" r="2.5" fill="none" stroke="#e82020" stroke-width="0.8"/></svg>
<div class="btn" style="left:1136.0px;top:373.0px;width:26.5px;height:27.4px;"></div>
<div class="a" style="left:1162.5px;top:373.0px;width:25.5px;height:27.4px;background:#fff;border:1px solid #d8d8d8"></div>
<div class="btn" style="left:1188.5px;top:373.0px;width:26.5px;height:27.4px;"></div>
<svg class="a" style="left:1136.0px;top:373.0px" width="27" height="28" viewBox="1136.0 373.0 27 28"><rect x="1140" y="384.2" width="19" height="3.6" rx="0.8" fill="#4a78c8" stroke="#2a4a98" stroke-width="0.6"/></svg>
<svg class="a" style="left:1188.0px;top:373.0px" width="28" height="28" viewBox="1188.0 373.0 28 28"><path d="M1200.2,377.5 h3.4 v7.2 h7.2 v3.4 h-7.2 v7.2 h-3.4 v-7.2 h-7.2 v-3.4 h7.2 z" fill="#4a78c8" stroke="#2a4a98" stroke-width="0.6"/></svg>
<div class="a" style="left:1050.0px;top:410.6px;width:120px;text-align:center;font-size:8.20px;line-height:8.20px;font-weight:bold;color:#111;white-space:nowrap;will-change:transform;">Remove Last</div>
<div class="a" style="left:1128.5px;top:410.6px;width:120px;text-align:center;font-size:8.10px;line-height:8.10px;font-weight:bold;color:#111;white-space:nowrap;will-change:transform;">Undo Remove</div>
<div class="btn" style="left:1079.0px;top:419.3px;width:53.0px;height:27.1px;"></div>
<div class="btn" style="left:1162.4px;top:419.3px;width:52.3px;height:27.1px;"></div>
<svg class="a" style="left:1079.0px;top:419.0px" width="54" height="28" viewBox="1079.0 419.0 54 28"><path d="M1081,435 C1090,428 1115,427 1125,431" fill="none" stroke="#222" stroke-width="0.8"/><circle cx="1085.5" cy="433.6" r="2.5" fill="none" stroke="#e82020" stroke-width="0.8"/><circle cx="1094.3" cy="430" r="2.5" fill="none" stroke="#e82020" stroke-width="0.8"/><circle cx="1104" cy="429" r="2.5" fill="none" stroke="#e82020" stroke-width="0.8"/><circle cx="1113.5" cy="430" r="2.5" fill="none" stroke="#e82020" stroke-width="0.8"/><path d="M1120,430 L1127,438 M1127,430 L1120,438" stroke="#e81818" stroke-width="1.6"/><path d="M1093,438.5 h6" stroke="#2a60d0" stroke-width="1.2"/><path d="M1093,438.5 l3,-2.2 v4.4 z" fill="#2a60d0"/></svg>
<div class="a" style="left:1046.0px;top:433.2px;width:120px;text-align:center;font-size:11.00px;line-height:11.00px;font-weight:normal;color:#222;white-space:nowrap;will-change:transform;">-1</div>
<svg class="a" style="left:1162.0px;top:419.0px" width="54" height="28" viewBox="1162.0 419.0 54 28"><path d="M1164,436 C1175,428 1195,427 1212,433" fill="none" stroke="#222" stroke-width="0.8"/><circle cx="1169" cy="434" r="2.5" fill="none" stroke="#e82020" stroke-width="0.8"/><circle cx="1178" cy="430" r="2.5" fill="none" stroke="#e82020" stroke-width="0.8"/><circle cx="1187.5" cy="429" r="2.5" fill="none" stroke="#e82020" stroke-width="0.8"/><circle cx="1197" cy="430" r="2.5" fill="none" stroke="#e82020" stroke-width="0.8"/><circle cx="1207.3" cy="433" r="4.3" fill="none" stroke="#2a60d0" stroke-width="0.9"/><circle cx="1207.3" cy="433" r="2.4" fill="none" stroke="#e82020" stroke-width="0.8"/><path d="M1194,438.5 h6" stroke="#2a60d0" stroke-width="1.2"/><path d="M1202,438.5 l-3,-2.2 v4.4 z" fill="#2a60d0"/></svg>
<div class="a" style="left:1124.0px;top:433.5px;width:120px;text-align:center;font-size:11.00px;line-height:11.00px;font-weight:normal;color:#222;white-space:nowrap;will-change:transform;">+1</div>
<div class="btn" style="left:1114.4px;top:455.5px;width:65.4px;height:26.8px;"></div>
<div class="a" style="left:1078.4px;top:461.9px;width:120px;text-align:center;font-size:7.55px;line-height:7.55px;font-weight:normal;color:#222;white-space:nowrap;will-change:transform;">Continuous</div>
<div class="a" style="left:1078.7px;top:470.2px;width:120px;text-align:center;font-size:7.30px;line-height:7.30px;font-weight:normal;color:#222;white-space:nowrap;will-change:transform;">Lines</div>
<div class="a" style="left:1161.0px;top:465.5px;width:8.2px;height:8.0px;border:1px solid #8a8a8a;background:#fff"></div>
<div class="a" style="left:1093.0px;top:771.0px;width:109.7px;height:22.7px;background:linear-gradient(#fbfefb 0%,#d8f5d2 30%,#9fe094 60%,#8cd884 100%);border:1px solid #b8d8b4;border-bottom-color:#88a888;border-right-color:#9ab89a"></div>
<div class="a" style="left:1068.2px;top:776.0px;width:120px;text-align:center;font-size:13.40px;line-height:13.40px;font-weight:bold;color:#111;white-space:nowrap;will-change:transform;">Quilt</div>
<svg class="a" style="left:1155.0px;top:772.0px" width="40" height="22" viewBox="1155.0 772.0 40 22"><path d="M1169.5,779 C1164,776.5 1158,779.5 1158.5,784 C1159,788.5 1165,789 1169,786.5 C1171.5,785 1173.5,783.5 1175,783" fill="none" stroke="#222" stroke-width="0.9" stroke-dasharray="1.5,0.5"/><path d="M1176,785 C1173,781 1174.5,775.5 1180.2,775.4 C1185.5,775.4 1187,781 1185.5,784.5 C1184,787.5 1180,788 1178,786.5 C1179.5,788.5 1181.5,790 1184,790.8" fill="none" stroke="#222" stroke-width="0.9" stroke-dasharray="1.5,0.5"/><rect x="1168.6" y="774.5" width="1.5" height="15.5" fill="#8890d0"/></svg>
<div class="a" style="left:1071.3px;top:798.0px;width:149.3px;height:10.0px;border:1px solid #bcbcbc;border-right-color:#fff;border-bottom:none;background:#f0f0f0"></div>
<svg class="a" style="left:0;top:0" width="1414" height="930" viewBox="0 0 1414 930">
<defs>
<linearGradient id="bgold" x1="25" y1="0" x2="418" y2="0" gradientUnits="userSpaceOnUse">
 <stop offset="0" stop-color="#f2dc88"/><stop offset="0.55" stop-color="#f0c424"/><stop offset="1" stop-color="#c9952c"/></linearGradient>
<linearGradient id="bdark" x1="30" y1="0" x2="414" y2="0" gradientUnits="userSpaceOnUse">
 <stop offset="0" stop-color="#646464"/><stop offset="0.5" stop-color="#3a3836"/><stop offset="1" stop-color="#221e1b"/></linearGradient>
<linearGradient id="binner" x1="38" y1="40" x2="407" y2="160" gradientUnits="userSpaceOnUse">
 <stop offset="0" stop-color="#f9f0b4"/><stop offset="0.3" stop-color="#efd468"/><stop offset="0.55" stop-color="#f0c018"/><stop offset="0.75" stop-color="#d8a82a"/><stop offset="1" stop-color="#c08e32"/></linearGradient>
<linearGradient id="bcream" x1="150" y1="165" x2="215" y2="285" gradientUnits="userSpaceOnUse">
 <stop offset="0" stop-color="#fffdf6"/><stop offset="0.3" stop-color="#fcf3da"/><stop offset="0.65" stop-color="#f1d37c"/><stop offset="1" stop-color="#e2b444"/></linearGradient>
<linearGradient id="bcream2" x1="38" y1="0" x2="407" y2="0" gradientUnits="userSpaceOnUse">
 <stop offset="0" stop-color="#fff6d8" stop-opacity="0.35"/><stop offset="0.45" stop-color="#fff" stop-opacity="0"/><stop offset="0.7" stop-color="#ecdcc0" stop-opacity="0.3"/><stop offset="1" stop-color="#ecdcc4" stop-opacity="0.85"/></linearGradient>
<linearGradient id="bband" x1="38" y1="0" x2="407" y2="0" gradientUnits="userSpaceOnUse">
 <stop offset="0" stop-color="#daa636"/><stop offset="0.5" stop-color="#c9922e"/><stop offset="1" stop-color="#b67a28"/></linearGradient>
<clipPath id="bclip"><rect x="38" y="40" width="369" height="235" rx="6" ry="6"/></clipPath>
</defs>
<rect x="410" y="28" width="11" height="92" fill="#c8982e"/>
<rect x="410" y="120" width="11" height="20" fill="#bd7b2a"/>
<path d="M410,140 H421 V277 A11,11 0 0 1 410,288 H36 A11,11 0 0 1 25,277 V270 H410 Z" fill="#ffffff" opacity="0.45"/>
<path d="M410,140 H421 V277 A11,11 0 0 1 410,288 H380 V270 H410 Z" fill="#fbf6ea"/>
<rect x="30" y="284" width="146" height="4" fill="#e8d9a8"/>
<rect x="25" y="28" width="393" height="258" rx="11" ry="11" fill="url(#bgold)"/>
<rect x="30.5" y="33" width="383.5" height="249" rx="9" ry="9" fill="url(#bdark)"/>
<rect x="38" y="40" width="369" height="235" rx="6" ry="6" fill="url(#binner)"/>
<g clip-path="url(#bclip)">
<path d="M30,226 C90,180 190,138 300,136 C350,135 390,140 412,150 L412,300 L30,300 Z" fill="url(#bband)"/>
<path d="M30,244 C95,188 200,148 300,142 C345,140 385,146 412,158 L412,300 L30,300 Z" fill="url(#bcream)"/>
<path d="M30,244 C95,188 200,148 300,142 C345,140 385,146 412,158 L412,300 L30,300 Z" fill="url(#bcream2)"/>
</g>
<polygon points="73.43,47.50 75.62,57.90 81.87,49.31 79.34,59.63 88.70,54.59 81.93,62.79 92.55,62.32 82.90,66.77 92.67,70.95 82.04,70.78 89.03,78.78 79.54,74.01 82.36,84.26 75.87,75.84 73.97,86.30 71.78,75.90 65.53,84.49 68.06,74.17 58.70,79.21 65.47,71.01 54.85,71.48 64.50,67.03 54.73,62.85 65.36,63.02 58.37,55.02 67.86,59.79 65.04,49.54 71.53,57.96" fill="#2a2624"/>
<circle cx="73.9" cy="66.6" r="3.4" fill="#f3e6a4"/>
<g fill="#1f1c1a">
<rect x="142" y="56.5" width="140" height="2.1"/>
<rect x="142" y="140" width="140" height="2.1"/>
<rect x="142" y="56.5" width="2.1" height="136.5"/>
<rect x="225.5" y="56.5" width="2.1" height="136.5"/>
</g>
<path d="M215.4,130 L215.4,89 A19.7,19.7 0 0 0 176,89 L176,90.3 L174.5,90.3 A19.8,19.8 0 0 0 174.5,130 Z" fill="#221f1e"/>
<text x="57" y="253.5" font-family="Liberation Sans" font-size="54.5" fill="#3c3c3e" textLength="329" lengthAdjust="spacingAndGlyphs">Corner Maker</text>
</svg>
</body></html>
